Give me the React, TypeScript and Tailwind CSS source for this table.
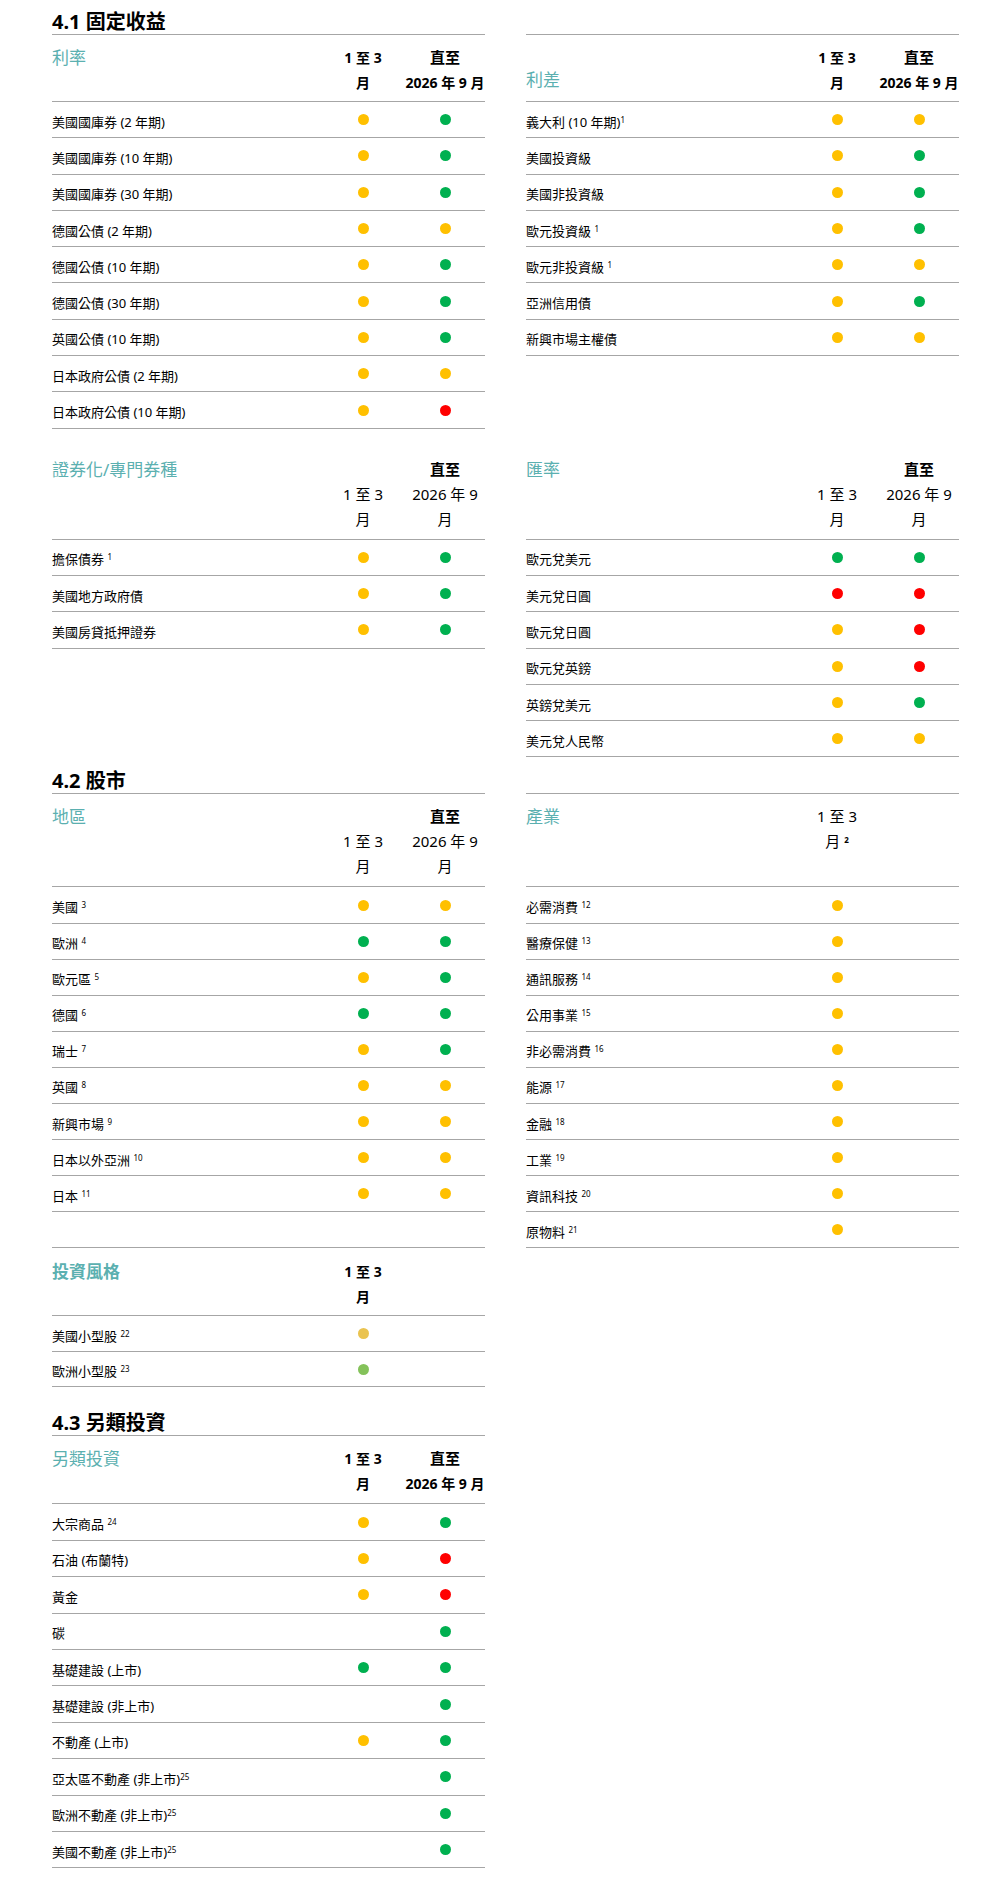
import type { ReactNode } from 'react';

type Dot = 'y' | 'g' | 'r' | 'my' | 'lg' | null;

interface Row {
  label: ReactNode;
  dots: Dot[];
}

const dotColor: Record<Exclude<Dot, null>, string> = {
  y: 'bg-[#ffc000]',
  g: 'bg-[#00b050]',
  r: 'bg-[#ff0000]',
  my: 'bg-[#eac350]',
  lg: 'bg-[#84c25a]',
};

// label with an optional footnote number
function L(text: string, note?: string, space = true): ReactNode {
  return (
    <>
      {text}
      {note && (
        <>
          {space ? ' ' : ''}
          <sup className="text-[8px]">{note}</sup>
        </>
      )}
    </>
  );
}

function Heading({ children }: { children?: ReactNode }) {
  return <h2 className="h-6 text-[20px] font-bold leading-6 text-black">{children}</h2>;
}

interface TableProps {
  title: string;
  titleBold?: boolean;
  titleLow?: boolean;
  bold?: boolean;
  cols: ReactNode[][];
  rows: Row[];
  bordered?: boolean;
  headerClass: string;
  rowClass: string;
}

function Table({ title, titleBold, titleLow, bold, cols, rows, bordered, headerClass, rowClass }: TableProps) {
  const base = bold ? 'text-[14px] font-bold' : 'text-[15px]';
  return (
    <div className={bordered ? 'border-t border-[#a6a6a6]' : ''}>
      <div className={`grid grid-cols-[1fr_84px_80px] border-b border-[#a6a6a6] leading-[25px] ${headerClass}`}>
        <div
          className={`text-[17px] text-[#5bb0b0] ${titleBold ? 'font-bold' : ''} ${titleLow ? 'mt-[22px]' : ''}`}
        >
          {title}
        </div>
        {cols.map((lines, i) => (
          <div key={i} className="whitespace-nowrap text-center text-black">
            {lines.map((line, j) => (
              <div key={j} className={line === '直至' ? 'text-[15px] font-bold' : base}>
                {line === '' ? '\u00a0' : line}
              </div>
            ))}
          </div>
        ))}
      </div>
      {rows.map((row, i) => (
        <div
          key={i}
          className={`grid grid-cols-[1fr_84px_80px] items-center border-b border-[#a6a6a6] ${rowClass}`}
        >
          <div className="whitespace-nowrap pt-[4px] text-[13px] leading-4 text-black">{row.label}</div>
          {[0, 1].map((c) => {
            const d = row.dots[c];
            return (
              <div key={c} className="flex justify-center">
                {d && <span className={`block h-[11px] w-[11px] rounded-full ${dotColor[d]}`} />}
              </div>
            );
          })}
        </div>
      ))}
    </div>
  );
}

const boldCols = [
  ['1 至 3', '月'],
  ['直至', '2026 年 9 月'],
];
const plainCols = [
  ['', '1 至 3', '月'],
  ['直至', '2026 年 9', '月'],
];

const rates: Row[] = [
  { label: '美國國庫券 (2 年期)', dots: ['y', 'g'] },
  { label: '美國國庫券 (10 年期)', dots: ['y', 'g'] },
  { label: '美國國庫券 (30 年期)', dots: ['y', 'g'] },
  { label: '德國公債 (2 年期)', dots: ['y', 'y'] },
  { label: '德國公債 (10 年期)', dots: ['y', 'g'] },
  { label: '德國公債 (30 年期)', dots: ['y', 'g'] },
  { label: '英國公債 (10 年期)', dots: ['y', 'g'] },
  { label: '日本政府公債 (2 年期)', dots: ['y', 'y'] },
  { label: '日本政府公債 (10 年期)', dots: ['y', 'r'] },
];

const spreads: Row[] = [
  { label: L('義大利 (10 年期)', '1', false), dots: ['y', 'y'] },
  { label: '美國投資級', dots: ['y', 'g'] },
  { label: '美國非投資級', dots: ['y', 'g'] },
  { label: L('歐元投資級', '1'), dots: ['y', 'g'] },
  { label: L('歐元非投資級', '1'), dots: ['y', 'y'] },
  { label: '亞洲信用債', dots: ['y', 'g'] },
  { label: '新興市場主權債', dots: ['y', 'y'] },
];

const securitised: Row[] = [
  { label: L('擔保債券', '1'), dots: ['y', 'g'] },
  { label: '美國地方政府債', dots: ['y', 'g'] },
  { label: '美國房貸抵押證券', dots: ['y', 'g'] },
];

const fx: Row[] = [
  { label: '歐元兌美元', dots: ['g', 'g'] },
  { label: '美元兌日圓', dots: ['r', 'r'] },
  { label: '歐元兌日圓', dots: ['y', 'r'] },
  { label: '歐元兌英鎊', dots: ['y', 'r'] },
  { label: '英鎊兌美元', dots: ['y', 'g'] },
  { label: '美元兌人民幣', dots: ['y', 'y'] },
];

const regions: Row[] = [
  { label: L('美國', '3'), dots: ['y', 'y'] },
  { label: L('歐洲', '4'), dots: ['g', 'g'] },
  { label: L('歐元區', '5'), dots: ['y', 'g'] },
  { label: L('德國', '6'), dots: ['g', 'g'] },
  { label: L('瑞士', '7'), dots: ['y', 'g'] },
  { label: L('英國', '8'), dots: ['y', 'y'] },
  { label: L('新興市場', '9'), dots: ['y', 'y'] },
  { label: L('日本以外亞洲', '10'), dots: ['y', 'y'] },
  { label: L('日本', '11'), dots: ['y', 'y'] },
  { label: '', dots: [] },
];

const sectors: Row[] = [
  ['必需消費', '12'],
  ['醫療保健', '13'],
  ['通訊服務', '14'],
  ['公用事業', '15'],
  ['非必需消費', '16'],
  ['能源', '17'],
  ['金融', '18'],
  ['工業', '19'],
  ['資訊科技', '20'],
  ['原物料', '21'],
].map(([t, n]) => ({ label: L(t, n), dots: ['y'] as Dot[] }));

const styles: Row[] = [
  { label: L('美國小型股', '22'), dots: ['my'] },
  { label: L('歐洲小型股', '23'), dots: ['lg'] },
];

const alternatives: Row[] = [
  { label: L('大宗商品', '24'), dots: ['y', 'g'] },
  { label: '石油 (布蘭特)', dots: ['y', 'r'] },
  { label: '黃金', dots: ['y', 'r'] },
  { label: '碳', dots: [null, 'g'] },
  { label: '基礎建設 (上市)', dots: ['g', 'g'] },
  { label: '基礎建設 (非上市)', dots: [null, 'g'] },
  { label: '不動產 (上市)', dots: ['y', 'g'] },
  { label: L('亞太區不動產 (非上市)', '25', false), dots: [null, 'g'] },
  { label: L('歐洲不動產 (非上市)', '25', false), dots: [null, 'g'] },
  { label: L('美國不動產 (非上市)', '25', false), dots: [null, 'g'] },
];

export default function App() {
  return (
    <div className="min-h-[1902px] w-[1000px] bg-white pl-[52px] pt-[10px] font-['Noto_Sans','Noto_Sans_CJK_TC',sans-serif] text-black">
      {/* 4.1 */}
      <div className="grid grid-cols-[433px_433px] items-start gap-x-[41px]">
        <div>
          <Heading>4.1 固定收益</Heading>
          <Table
            title="利率"
            bold
            bordered
            cols={boldCols}
            rows={rates}
            headerClass="h-[67px] pt-[10px]"
            rowClass="h-[36.3px]"
          />
        </div>
        <div>
          <Heading />
          <Table
            title="利差"
            titleLow
            bold
            bordered
            cols={boldCols}
            rows={spreads}
            headerClass="h-[67px] pt-[10px]"
            rowClass="h-[36.3px]"
          />
        </div>
      </div>

      <div className="mt-[17px] grid grid-cols-[433px_433px] items-start gap-x-[41px]">
        <Table
          title="證券化/專門券種"
          cols={plainCols}
          rows={securitised}
          headerClass="h-[94px] pt-[11px]"
          rowClass="h-[36.3px]"
        />
        <Table
          title="匯率"
          cols={plainCols}
          rows={fx}
          headerClass="h-[94px] pt-[11px]"
          rowClass="h-[36.3px]"
        />
      </div>

      {/* 4.2 */}
      <div className="mt-[12px] grid grid-cols-[433px_433px] items-start gap-x-[41px]">
        <div>
          <Heading>4.2 股市</Heading>
          <Table
            title="地區"
            bordered
            cols={plainCols}
            rows={regions}
            headerClass="h-[93px] pt-[10px]"
            rowClass="h-[36.1px]"
          />
        </div>
        <div>
          <Heading />
          <Table
            title="產業"
            bordered
            cols={[
              [
                '1 至 3',
                <>
                  月 <sup className="text-[8px] font-bold">2</sup>
                </>,
                '',
              ],
              [],
            ]}
            rows={sectors}
            headerClass="h-[93px] pt-[10px]"
            rowClass="h-[36.1px]"
          />
        </div>
      </div>

      <div className="w-[433px]">
        <Table
          title="投資風格"
          titleBold
          bold
          cols={[['1 至 3', '月'], []]}
          rows={styles}
          headerClass="h-[68px] pt-[11px]"
          rowClass="h-[35.5px]"
        />

        {/* 4.3 */}
        <div className="mt-[24px]">
          <Heading>4.3 另類投資</Heading>
          <Table
            title="另類投資"
            bold
            bordered
            cols={boldCols}
            rows={alternatives}
            headerClass="h-[68px] pt-[10px]"
            rowClass="h-[36.4px]"
          />
        </div>
      </div>
    </div>
  );
}
